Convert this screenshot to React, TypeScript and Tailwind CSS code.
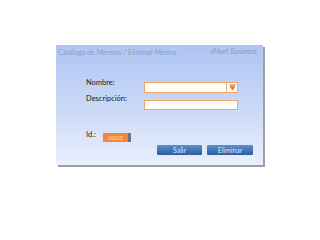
import React from "react";

const ArrowDown = () => (
  <svg width="7" height="7" viewBox="0 0 7 7">
    <rect x="0.5" y="0.5" width="6" height="1.2" fill="#e8742a" />
    <polygon points="0.5,2.3 6.5,2.3 3.5,6.5" fill="#e8742a" />
  </svg>
);

const App = () => {
  return (
    <div className="w-[320px] h-[240px] bg-white pt-[45px] pl-[56px] font-['Lato','Liberation_Sans',sans-serif]">
      {/* Panel */}
      <div className="w-[207px] h-[120px] bg-gradient-to-b from-[#aec5f2] via-[#c9d8f6] to-[#eaeffb] shadow-[2px_2px_0_#9c9fa6] flex flex-col">
        {/* Title bar */}
        <div className="h-[14px] flex items-center justify-between px-[2px] text-[7px] text-[#8e9cb8]">
          <span>Catálogo de Mermas / Eliminar Merma</span>
          <span className="italic pr-[4px] text-[7.5px]">sMart Business</span>
        </div>

        {/* Nombre */}
        <div className="flex items-start mt-[19px] pl-[30px]">
          <span className="w-[58px] text-[7.5px] leading-[9px] text-[#1c1c1c]">Nombre:</span>
          <div className="mt-[4px] w-[94px] h-[11px] border border-[#f3a565] bg-[#fffdf8] flex justify-end">
            <div className="w-[11px] h-full border-l border-[#d8b898] flex items-center justify-center">
              <ArrowDown />
            </div>
          </div>
        </div>

        {/* Descripción */}
        <div className="flex items-start mt-[1px] pl-[30px]">
          <span className="w-[58px] text-[7.5px] leading-[9px] text-[#1c1c1c]">Descripción:</span>
          <div className="mt-[6px] w-[94px] h-[10px] border border-[#f3a565] bg-[#fffdf8]" />
        </div>

        {/* Id */}
        <div className="flex items-start mt-[20px] pl-[30px]">
          <span className="w-[17px] text-[7.5px] leading-[9px] text-[#1c1c1c]">Id.:</span>
          <div className="mt-[3px] w-[25px] h-[9px] bg-[#f5873a] shadow-[3px_0_0_#6f7480] flex items-center justify-center text-[6.5px] text-[#ffd9bd]">
            0003
          </div>
        </div>

        {/* Buttons */}
        <div className="flex gap-[5px] mt-[3px] pl-[101px]">
          <button className="w-[45px] h-[10px] rounded-[1px] bg-gradient-to-b from-[#5b8fd0] to-[#2d5c9f] text-[7px] leading-[10px] text-[#dce8f8]">
            Salir
          </button>
          <button className="w-[46px] h-[10px] rounded-[1px] bg-gradient-to-b from-[#5b8fd0] to-[#2d5c9f] text-[7px] leading-[10px] text-[#dce8f8]">
            Eliminar
          </button>
        </div>
      </div>
    </div>
  );
};

export default App;
